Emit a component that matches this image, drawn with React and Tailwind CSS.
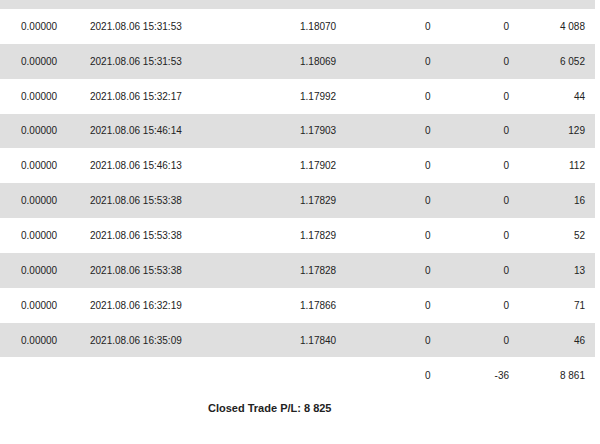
const rows = [
  ['0.00000', '2021.08.06 15:31:53', '1.18070', '0', '0', '4 088'],
  ['0.00000', '2021.08.06 15:31:53', '1.18069', '0', '0', '6 052'],
  ['0.00000', '2021.08.06 15:32:17', '1.17992', '0', '0', '44'],
  ['0.00000', '2021.08.06 15:46:14', '1.17903', '0', '0', '129'],
  ['0.00000', '2021.08.06 15:46:13', '1.17902', '0', '0', '112'],
  ['0.00000', '2021.08.06 15:53:38', '1.17829', '0', '0', '16'],
  ['0.00000', '2021.08.06 15:53:38', '1.17829', '0', '0', '52'],
  ['0.00000', '2021.08.06 15:53:38', '1.17828', '0', '0', '13'],
  ['0.00000', '2021.08.06 16:32:19', '1.17866', '0', '0', '71'],
  ['0.00000', '2021.08.06 16:35:09', '1.17840', '0', '0', '46'],
];

const cols = 'grid grid-cols-[90px_210px_125px_45px_39px_76px] items-center pr-[10px]';

export default function App() {
  return (
    <div className="w-[600px] h-[444px] bg-white text-[#222] text-[10px] font-['Liberation_Sans',Arial,sans-serif] overflow-hidden">
      <div className="w-[595px]">
        <div className="h-[9px] bg-[#dfdfdf]" />
        {rows.map((r, i) => (
          <div key={i} className={`${cols} h-[34.85px] ${i % 2 ? 'bg-[#dfdfdf]' : 'bg-white'}`}>
            <div className="pl-[21px]">{r[0]}</div>
            <div>{r[1]}</div>
            <div>{r[2]}</div>
            <div>{r[3]}</div>
            <div className="text-right">{r[4]}</div>
            <div className="text-right">{r[5]}</div>
          </div>
        ))}
        <div className={`${cols} h-[36px]`}>
          <div />
          <div />
          <div />
          <div>0</div>
          <div className="text-right">-36</div>
          <div className="text-right">8 861</div>
        </div>
        <div className="pl-[208px] pt-[7px] text-[11px] font-bold">Closed Trade P/L: 8 825</div>
      </div>
    </div>
  );
}
